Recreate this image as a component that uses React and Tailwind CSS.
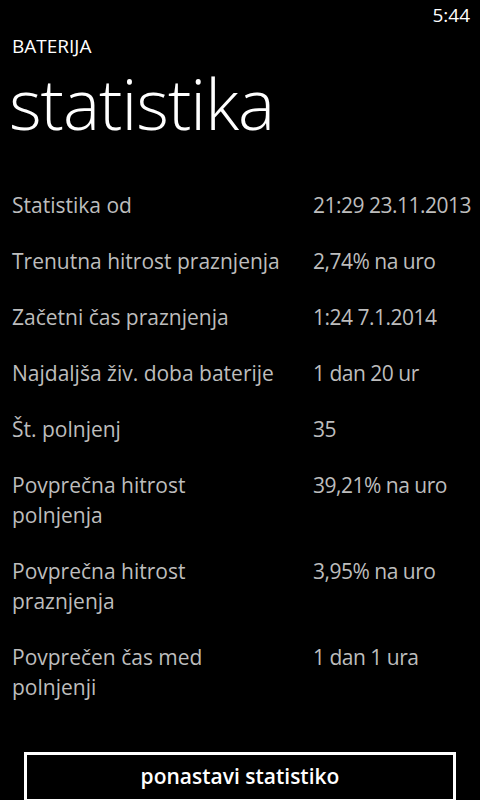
export default function App() {
  const rows = [
    { label: ["Statistika od"], value: "21:29 23.11.2013" },
    { label: ["Trenutna hitrost praznjenja"], value: "2,74% na uro" },
    { label: ["Začetni čas praznjenja"], value: "1:24 7.1.2014" },
    { label: ["Najdaljša živ. doba baterije"], value: "1 dan 20 ur" },
    { label: ["Št. polnjenj"], value: "35" },
    { label: ["Povprečna hitrost", "polnjenja"], value: "39,21% na uro" },
    { label: ["Povprečna hitrost", "praznjenja"], value: "3,95% na uro" },
    { label: ["Povprečen čas med", "polnjenji"], value: "1 dan 1 ura" },
  ];

  return (
    <div
      className="w-[480px] h-[800px] overflow-hidden bg-black text-white"
      style={{ fontFamily: '"Open Sans", "Noto Sans", sans-serif' }}
    >
      {/* Status bar */}
      <div className="flex justify-end h-[30px] pr-[10px] pt-[2px] text-[19px] leading-[26px]">
        5:44
      </div>

      {/* Header */}
      <div className="pl-[12px]">
        <div className="text-[19px] leading-[30px] pt-[1px]">BATERIJA</div>
        <div className="mt-[12px] text-[70px] font-light leading-[60px] tracking-[-1px] -ml-[3px]">
          statistika
        </div>
      </div>

      {/* Stats list */}
      <div className="mt-[57px] pl-[12px] pr-[8px] flex flex-col gap-[26px] text-[21px] leading-[30px] text-[#bdbdbd]">
        {rows.map((row) => (
          <div key={row.value} className="flex">
            <div className="w-[301px] shrink-0 whitespace-nowrap">
              {row.label.map((line) => (
                <div key={line}>{line}</div>
              ))}
            </div>
            <div className="whitespace-nowrap tracking-[-0.5px]">{row.value}</div>
          </div>
        ))}
      </div>

      {/* Reset button */}
      <div className="mt-[50px] px-[24px]">
        <button className="w-full h-[50px] border-[3px] border-white bg-black text-white text-[21px] font-semibold">
          ponastavi statistiko
        </button>
      </div>
    </div>
  );
}
